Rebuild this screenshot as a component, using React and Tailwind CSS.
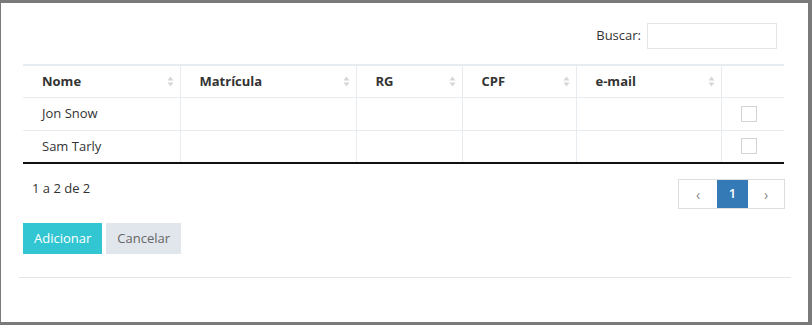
import React from 'react'

const font = { fontFamily: '"Open Sans", "Noto Sans", sans-serif' }

const SortIcon = () => (
  <svg width="7" height="11" viewBox="0 0 7 11" className="shrink-0">
    <path d="M3.5 0.5 L6.5 4.5 L0.5 4.5 Z" fill="#d6d6d6" />
    <path d="M3.5 10.5 L6.5 6.5 L0.5 6.5 Z" fill="#d6d6d6" />
  </svg>
)

const columns = [
  { label: 'Nome', w: 'w-[157px]' },
  { label: 'Matrícula', w: 'w-[176px]' },
  { label: 'RG', w: 'w-[106px]' },
  { label: 'CPF', w: 'w-[114px]' },
  { label: 'e-mail', w: 'w-[145px]' },
]

const rows = ['Jon Snow', 'Sam Tarly']

export default function App() {
  return (
    <div className="w-[812px] h-[325px] bg-[#7a7a7a] pt-[3px] pl-[1px] pr-[4px] pb-[3px]" style={font}>
      <div className="w-full h-full bg-white px-[18px] pr-[17px] pt-[20px] text-[13px] text-[#333]">
        <div className="pl-[4px] pr-[7px]">
          {/* Search */}
          <div className="flex justify-end items-center pr-[7px]">
            <label className="text-[13px] text-[#333] mr-[6px]">Buscar:</label>
            <input type="text" className="w-[130px] h-[26px] border border-[#e5e5e5] outline-none" />
          </div>

          {/* Table */}
          <table className="mt-[15px] w-[761px] border-collapse table-fixed">
            <thead>
              <tr className="h-[32px] border-t-2 border-[#e7ecf1]">
                {columns.map((c) => (
                  <th key={c.label} className={`${c.w} border-r border-b border-[#e7ecf1] pl-[19px] pr-[6px] text-left font-bold text-[13px] text-[#333]`}>
                    <div className="flex items-center justify-between">
                      <span>{c.label}</span>
                      <SortIcon />
                    </div>
                  </th>
                ))}
                <th className="border-b border-[#e7ecf1]"></th>
              </tr>
            </thead>
            <tbody>
              {rows.map((r, i) => (
                <tr key={r} className={`h-[33px] ${i === rows.length - 1 ? 'border-b-2 border-[#111]' : 'border-b border-[#e7ecf1]'}`}>
                  <td className="border-r border-[#e7ecf1] pl-[19px]">{r}</td>
                  <td className="border-r border-[#e7ecf1]"></td>
                  <td className="border-r border-[#e7ecf1]"></td>
                  <td className="border-r border-[#e7ecf1]"></td>
                  <td className="border-r border-[#e7ecf1]"></td>
                  <td className="pl-[19px]">
                    <span className="block w-[16px] h-[16px] border border-[#d4d4d4] bg-white"></span>
                  </td>
                </tr>
              ))}
            </tbody>
          </table>

          {/* Info + pagination */}
          <div className="mt-[15px] flex justify-between items-start">
            <span className="pl-[9px]">1 a 2 de 2</span>
            <div className="flex h-[30px] border border-[#ddd] -mr-[1px]">
              <span className="w-[38px] flex items-center justify-center text-[#888] text-[14px]">‹</span>
              <span className="w-[31px] flex items-center justify-center bg-[#337ab7] text-white font-semibold">1</span>
              <span className="w-[36px] flex items-center justify-center text-[#888] text-[14px]">›</span>
            </div>
          </div>

          {/* Buttons */}
          <div className="mt-[14px] flex gap-[4px]">
            <button className="h-[31px] px-[11px] bg-[#32c5d2] text-white text-[13px]">Adicionar</button>
            <button className="h-[31px] px-[11px] bg-[#e1e5ec] text-[#666] text-[13px]">Cancelar</button>
          </div>
        </div>

        <div className="mt-[23px] border-t border-[#e5e5e5]"></div>
      </div>
    </div>
  )
}
